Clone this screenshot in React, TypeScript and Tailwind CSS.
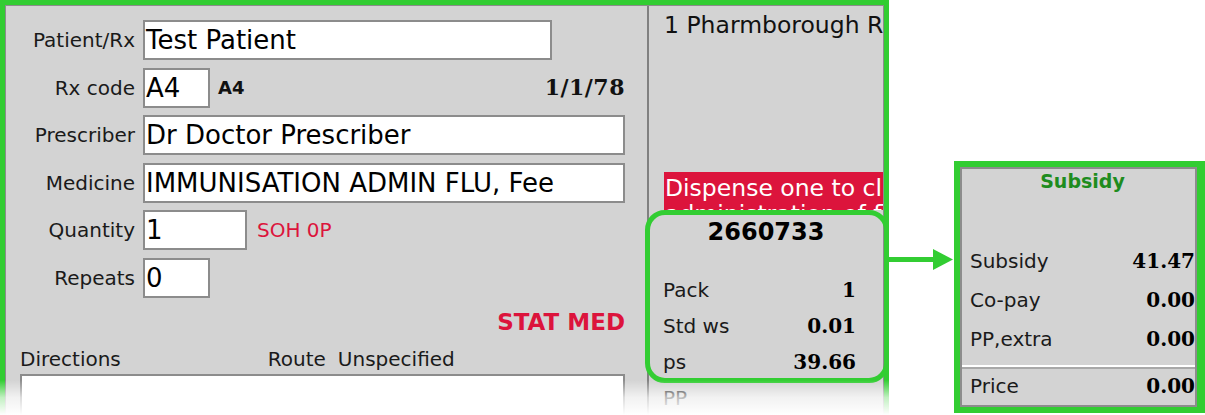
import React from "react";

const LIME = "border-[#32cd32]";

function Field({ label, children }: { label: string; children: React.ReactNode }) {
  return (
    <div className="flex items-center h-10">
      <div className="w-[115px] shrink-0 text-right text-[20px] leading-none text-[#1a1a1a]">{label}</div>
      <div className="ml-[8px] flex flex-1 items-center h-10">{children}</div>
    </div>
  );
}

function Input({ value, w }: { value: string; w: string }) {
  return (
    <div className={`${w} h-10 shrink-0 bg-white border-2 border-[#8c8c8c] flex items-center pl-[1px] text-[26px] leading-none text-black whitespace-nowrap overflow-hidden`}>
      {value}
    </div>
  );
}

function PriceRow({ label, value, h }: { label: string; value: string; h: string }) {
  return (
    <div className={`flex items-center justify-between ${h}`}>
      <span className="text-[20px] text-[#1a1a1a]">{label}</span>
      <span className="font-['DejaVu_Serif',serif] font-bold text-[20px] text-black">{value}</span>
    </div>
  );
}

export default function App() {
  return (
    <div className="relative w-[1205px] h-[415px] overflow-hidden bg-white flex items-start font-['DejaVu_Sans',sans-serif]">
      {/* main dispensing window */}
      <div className={`w-[889px] h-[415px] shrink-0 border-[5px] border-b-0 ${LIME}`}>
        <div className="h-full flex bg-[#d3d3d3] border border-b-0 border-[#8c8c8c]">
          {/* form */}
          <div className="w-[643px] shrink-0 border-r-2 border-[#808080] pl-[14px] pr-[22px] pt-[14px]">
            <div className="flex flex-col gap-y-[7.6px]">
              <Field label="Patient/Rx">
                <Input value="Test Patient" w="w-[409px]" />
              </Field>
              <Field label="Rx code">
                <Input value="A4" w="w-[67px]" />
                <span className="ml-[8px] text-[18px] font-bold text-[#111]">A4</span>
                <span className="ml-auto font-['DejaVu_Serif',serif] font-bold text-[22px] tracking-[0.5px] text-[#111]">1/1/78</span>
              </Field>
              <Field label="Prescriber">
                <Input value="Dr Doctor Prescriber" w="flex-1" />
              </Field>
              <Field label="Medicine">
                <Input value="IMMUNISATION ADMIN FLU, Fee" w="flex-1" />
              </Field>
              <Field label="Quantity">
                <Input value="1" w="w-[104px]" />
                <span className="ml-[10px] text-[20px] text-[#dc143c]">SOH 0P</span>
              </Field>
              <Field label="Repeats">
                <Input value="0" w="w-[67px]" />
              </Field>
            </div>
            <div className="mt-[12px] h-[24px] leading-[24px] text-right text-[23px] font-bold text-[#dc143c]">STAT MED</div>
            <div className="mt-[15px] flex h-[20px] leading-[20px] text-[20px] text-[#1a1a1a]">
              <span>Directions</span>
              <span className="ml-[147px]">Route</span>
              <span className="ml-[12px]">Unspecified</span>
            </div>
            <div className="mt-[5px] h-[60px] bg-white border-2 border-[#8c8c8c]" />
          </div>

          {/* drug info */}
          <div className="flex-1 min-w-0 overflow-hidden pl-[15px] pr-[27px] pt-[5px]">
            <div className="h-[28px] leading-[28px] text-[23.5px] text-[#111] whitespace-nowrap">1 Pharmborough Road</div>
            <div className="mt-[133px] -mr-[27px] h-[38px] overflow-hidden bg-[#dc143c] text-white text-[23.5px] leading-[26px] pt-[3px] pl-[1px] whitespace-nowrap">
              <div>Dispense one to client and record</div>
              <div>administration of flu vaccine</div>
            </div>
            <div className="-ml-[15px] -mr-[27px] mt-[8px] h-[28px] leading-[28px] text-center text-[24px] font-bold text-black">2660733</div>
            <div className="mt-[26px] -ml-[1px]">
              <PriceRow label="Pack" value="1" h="h-[36px]" />
              <PriceRow label="Std ws" value="0.01" h="h-[36px]" />
              <PriceRow label="ps" value="39.66" h="h-[36px]" />
              <PriceRow label="PP" value="" h="h-[36px]" />
            </div>
          </div>
        </div>
      </div>

      {/* subsidy panel callout */}
      <div className={`ml-[65px] mt-[161px] w-[251px] h-[252px] shrink-0 border-[6px] border-r-[8px] ${LIME}`}>
        <div className="h-full bg-[#d3d3d3] border-2 border-[#8c8c8c] pl-[8px]">
          <div className="h-[24px] leading-[24px] text-center text-[19px] font-bold text-[#1e8c1e]">Subsidy</div>
          <div className="mt-[48px]">
            <PriceRow label="Subsidy" value="41.47" h="h-[39px]" />
            <PriceRow label="Co-pay" value="0.00" h="h-[39px]" />
            <PriceRow label="PP,extra" value="0.00" h="h-[39px]" />
          </div>
          <div className="-ml-[8px] mt-[7px] border-t-2 border-white" />
          <div className="-ml-[8px] border-t-2 border-[#a8a8a8]" />
          <div className="mt-[5px]">
            <PriceRow label="Price" value="0.00" h="h-[24px]" />
          </div>
        </div>
      </div>

      {/* highlight around the price block */}
      <div className={`absolute left-[645px] top-[210px] w-[244px] h-[173px] rounded-[20px] border-[5px] ${LIME}`} />

      {/* connector arrow */}
      <svg className="absolute left-[889px] top-[247px]" width="64" height="25" viewBox="0 0 64 25">
        <rect x="0" y="10" width="46" height="5" fill="#32cd32" />
        <polygon points="44,2 64,12.5 44,23" fill="#32cd32" />
      </svg>

      {/* fade out at the bottom of the window */}
      <div className="absolute left-0 top-[380px] w-[892px] h-[35px] bg-gradient-to-b from-white/0 via-white/70 to-white" />
    </div>
  );
}
